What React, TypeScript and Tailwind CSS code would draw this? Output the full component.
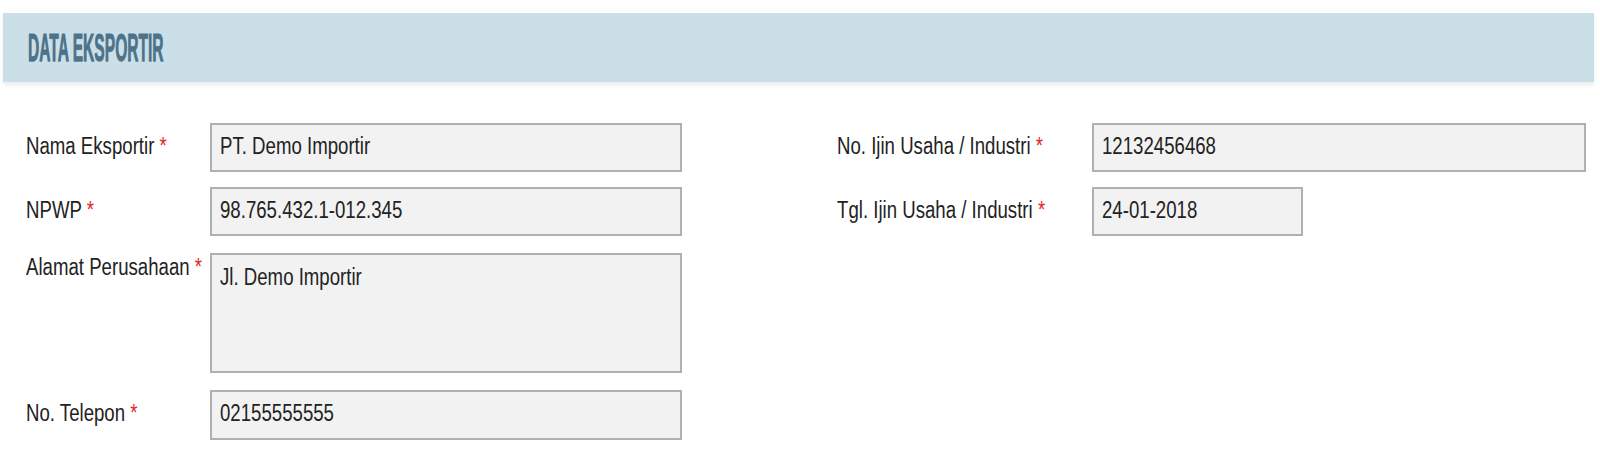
import type { ReactNode } from "react";

// Text in the reference is a narrow Arial; Liberation Sans squeezed to match
function Narrow({ children }: { children: ReactNode }) {
  return (
    <span className="inline-block origin-left scale-x-[0.81] whitespace-nowrap">
      {children}
    </span>
  );
}

function Req() {
  return <span className="text-[#e12b2b]">*</span>;
}

export default function App() {
  const left = [
    { label: "Nama Eksportir", value: "PT. Demo Importir" },
    { label: "NPWP", value: "98.765.432.1-012.345" },
  ];

  return (
    <div className="w-full h-[467px] bg-white font-['Liberation_Sans',Arial,sans-serif] text-[#222]">
      {/* Section header */}
      <div className="ml-[3px] mr-[6px] pt-[13px]">
        <div className="h-[69px] bg-[#cbdfe9] shadow-[0_3px_4px_rgba(0,0,0,0.08)] flex items-center pl-[25px]">
          <h2 className="font-bold text-[38px] leading-none text-[#4d7389] origin-left scale-x-[0.41] whitespace-nowrap [text-shadow:0_1px_1px_rgba(0,0,0,0.2)] [-webkit-text-stroke:0.8px_#4d7389]">
            DATA EKSPORTIR
          </h2>
        </div>
      </div>

      {/* Form */}
      <div className="flex mt-[41px] ml-[26px] text-[23px] leading-[28px]">
        {/* Left column */}
        <div className="w-[656px] flex flex-col">
          {left.map((f, i) => (
            <div key={f.label} className={`flex ${i > 0 ? "mt-[15px]" : ""}`}>
              <label className="w-[184px] pt-[9px]">
                <Narrow>
                  {f.label} <Req />
                </Narrow>
              </label>
              <div className="w-[472px] h-[49px] border-2 border-[#b0b0b0] bg-[#f2f2f2] pt-[7px] px-[8px]">
                <Narrow>{f.value}</Narrow>
              </div>
            </div>
          ))}

          <div className="flex mt-[17px]">
            <label className="w-[184px]">
              <Narrow>
                Alamat Perusahaan <Req />
              </Narrow>
            </label>
            <div className="w-[472px] h-[120px] border-2 border-[#b0b0b0] bg-[#f2f2f2] pt-[8px] px-[8px]">
              <Narrow>Jl. Demo Importir</Narrow>
            </div>
          </div>

          <div className="flex mt-[17px]">
            <label className="w-[184px] pt-[9px]">
              <Narrow>
                No. Telepon <Req />
              </Narrow>
            </label>
            <div className="w-[472px] h-[50px] border-2 border-[#b0b0b0] bg-[#f2f2f2] pt-[7px] px-[8px]">
              <Narrow>02155555555</Narrow>
            </div>
          </div>
        </div>

        {/* Right column */}
        <div className="ml-[155px] flex flex-col">
          <div className="flex">
            <label className="w-[255px] pt-[9px]">
              <Narrow>
                No. Ijin Usaha / Industri <Req />
              </Narrow>
            </label>
            <div className="w-[494px] h-[49px] border-2 border-[#b0b0b0] bg-[#f2f2f2] pt-[7px] px-[8px]">
              <Narrow>12132456468</Narrow>
            </div>
          </div>
          <div className="flex mt-[15px]">
            <label className="w-[255px] pt-[9px]">
              <Narrow>
                Tgl. Ijin Usaha / Industri <Req />
              </Narrow>
            </label>
            <div className="w-[211px] h-[49px] border-2 border-[#b0b0b0] bg-[#f2f2f2] pt-[7px] px-[8px]">
              <Narrow>24-01-2018</Narrow>
            </div>
          </div>
        </div>
      </div>
    </div>
  );
}
